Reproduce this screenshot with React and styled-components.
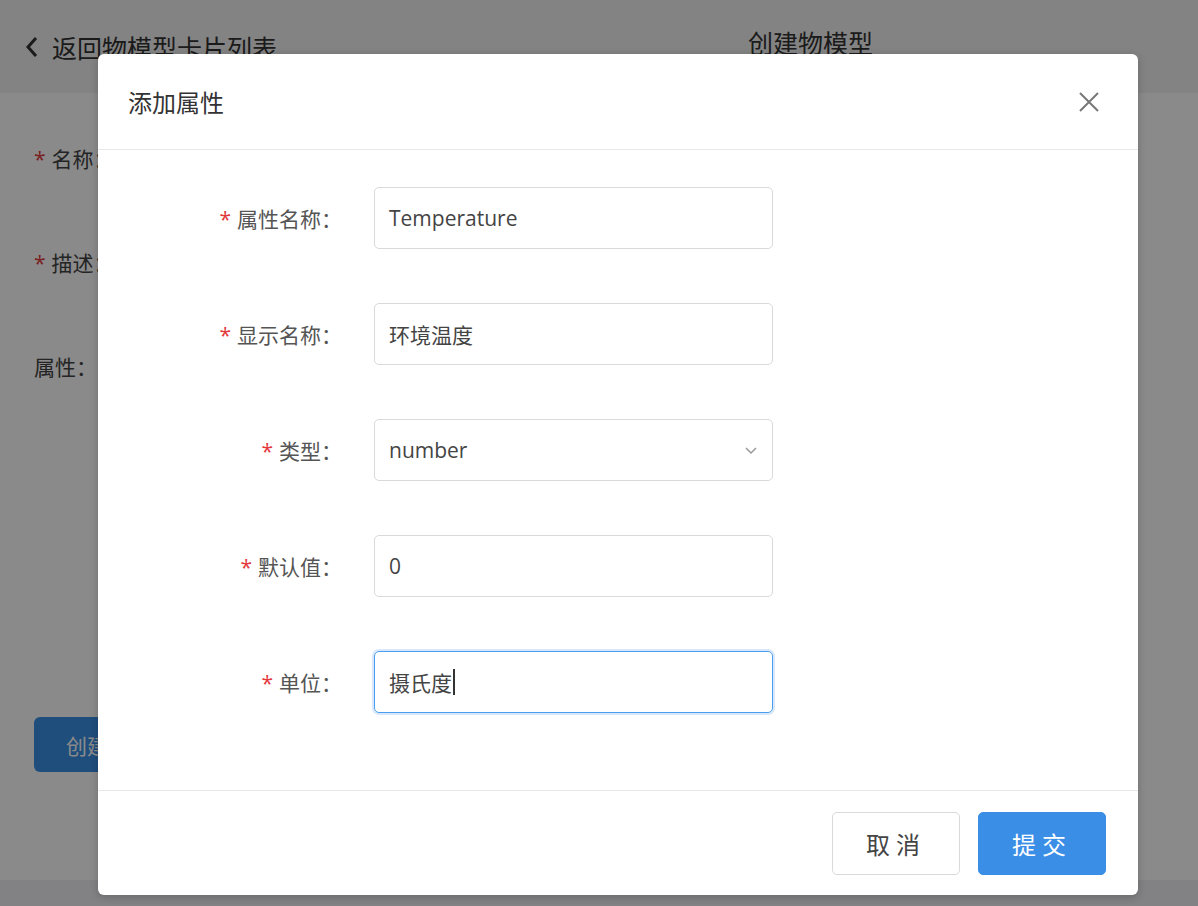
import React from "react";
import styled, { createGlobalStyle } from "styled-components";

const Global = createGlobalStyle`
  html, body { margin: 0; padding: 0; }
  body { font-family: "Open Sans", "Noto Sans CJK SC", sans-serif; width: 1198px; height: 906px; overflow: hidden; }
`;

const Page = styled.div`
  position: relative;
  width: 1198px;
  height: 906px;
  background: #fff;
  display: flex;
  flex-direction: column;
`;

const Header = styled.div`
  height: 93px;
  background: #f2f2f2;
  display: flex;
  align-items: center;
  padding: 0 24px;
  font-size: 25px;
  color: #333;
  position: relative;
`;

const Title = styled.div`
  position: absolute;
  left: 748px;
  top: 24px;
  font-size: 25px;
`;

const Form = styled.div`
  flex: 1;
  padding: 50px 34px 0;
  display: flex;
  flex-direction: column;
  font-size: 21px;
  color: #444;
`;

const BgRow = styled.div`
  height: 104px;
`;

const Star = styled.span`
  color: #e4393c;
  margin-right: 6px;
`;

const BgButton = styled.div`
  margin-top: 262px;
  width: 150px;
  height: 55px;
  border-radius: 6px;
  background: #3a8ee6;
  color: #fff;
  display: flex;
  align-items: center;
  padding-left: 32px;
  box-sizing: border-box;
`;

const Footer = styled.div`
  height: 26px;
  background: #f0f1f5;
`;

const Overlay = styled.div`
  position: absolute;
  inset: 0;
  background: rgba(0, 0, 0, 0.46);
`;

const Modal = styled.div`
  position: absolute;
  left: 98px;
  top: 54px;
  width: 1040px;
  height: 841px;
  background: #fff;
  border-radius: 6px;
  display: flex;
  flex-direction: column;
  box-shadow: 0 2px 8px rgba(0, 0, 0, 0.2);
`;

const ModalHead = styled.div`
  height: 95px;
  border-bottom: 1px solid #e8e8e8;
  display: flex;
  align-items: center;
  justify-content: space-between;
  padding: 0 30px;
  font-size: 24px;
  color: #333;
`;

const Close = styled.svg`
  width: 22px;
  height: 22px;
  margin-right: 8px;
`;

const ModalBody = styled.div`
  flex: 1;
  padding-top: 37px;
  display: flex;
  flex-direction: column;
  gap: 54px;
`;

const Field = styled.div`
  display: flex;
  align-items: center;
  height: 62px;
  margin-bottom: ${(p) => p.$mb || 0}px;
`;

const Label = styled.div`
  width: 244px;
  text-align: right;
  font-size: 21px;
  color: #555;
  padding-right: 32px;
`;

const Input = styled.div`
  width: 399px;
  height: 62px;
  box-sizing: border-box;
  border: 1px solid ${(p) => (p.$focus ? "#4a9eef" : "#d9d9d9")};
  box-shadow: ${(p) => (p.$focus ? "0 0 0 2px rgba(58,142,230,0.2)" : "none")};
  border-radius: 5px;
  padding: 0 14px;
  display: flex;
  align-items: center;
  justify-content: space-between;
  font-size: 21px;
  color: #444;
`;

const Caret = styled.span`
  display: inline-block;
  width: 1.5px;
  height: 26px;
  background: #333;
  margin-left: 1px;
`;

const ModalFoot = styled.div`
  height: 104px;
  border-top: 1px solid #e8e8e8;
  display: flex;
  justify-content: flex-end;
  align-items: center;
  gap: 18px;
  padding-right: 32px;
`;

const Btn = styled.div`
  width: 128px;
  height: 63px;
  box-sizing: border-box;
  border-radius: 5px;
  display: flex;
  align-items: center;
  justify-content: center;
  font-size: 24px;
  letter-spacing: 6px;
  background: ${(p) => (p.$primary ? "#3a8ee6" : "#fff")};
  color: ${(p) => (p.$primary ? "#fff" : "#444")};
  border: 1px solid ${(p) => (p.$primary ? "#3a8ee6" : "#d9d9d9")};
`;

const fields = [
  { label: "属性名称", value: "Temperature" },
  { label: "显示名称", value: "环境温度" },
  { label: "类型", value: "number", select: true },
  { label: "默认值", value: "0" },
  { label: "单位", value: "摄氏度", focus: true },
];

export default function App() {
  return (
    <Page>
      <Global />
      <Header>
        <svg width="16" height="24" viewBox="0 0 16 24" style={{ marginRight: 12 }}>
          <path d="M12 3 L4 12 L12 21" fill="none" stroke="#333" strokeWidth="3" />
        </svg>
        返回物模型卡片列表
        <Title>创建物模型</Title>
      </Header>
      <Form>
        <BgRow><Star>*</Star>名称：</BgRow>
        <BgRow><Star>*</Star>描述：</BgRow>
        <BgRow>属性：</BgRow>
        <BgButton>创建</BgButton>
      </Form>
      <Footer />
      <Overlay />
      <Modal>
        <ModalHead>
          添加属性
          <Close viewBox="0 0 22 22">
            <path d="M2 2 L20 20 M20 2 L2 20" stroke="#777" strokeWidth="2" />
          </Close>
        </ModalHead>
        <ModalBody>
          {fields.map((f) => (
            <Field key={f.label}>
              <Label><Star>*</Star>{f.label}：</Label>
              <Input $focus={f.focus}>
                <span style={{ display: "flex", alignItems: "center" }}>
                  {f.value}
                  {f.focus && <Caret />}
                </span>
                {f.select && (
                  <svg width="14" height="10" viewBox="0 0 14 10">
                    <path d="M2 3 L7 8 L12 3" fill="none" stroke="#999" strokeWidth="1.5" />
                  </svg>
                )}
              </Input>
            </Field>
          ))}
        </ModalBody>
        <ModalFoot>
          <Btn>取消</Btn>
          <Btn $primary>提交</Btn>
        </ModalFoot>
      </Modal>
    </Page>
  );
}
